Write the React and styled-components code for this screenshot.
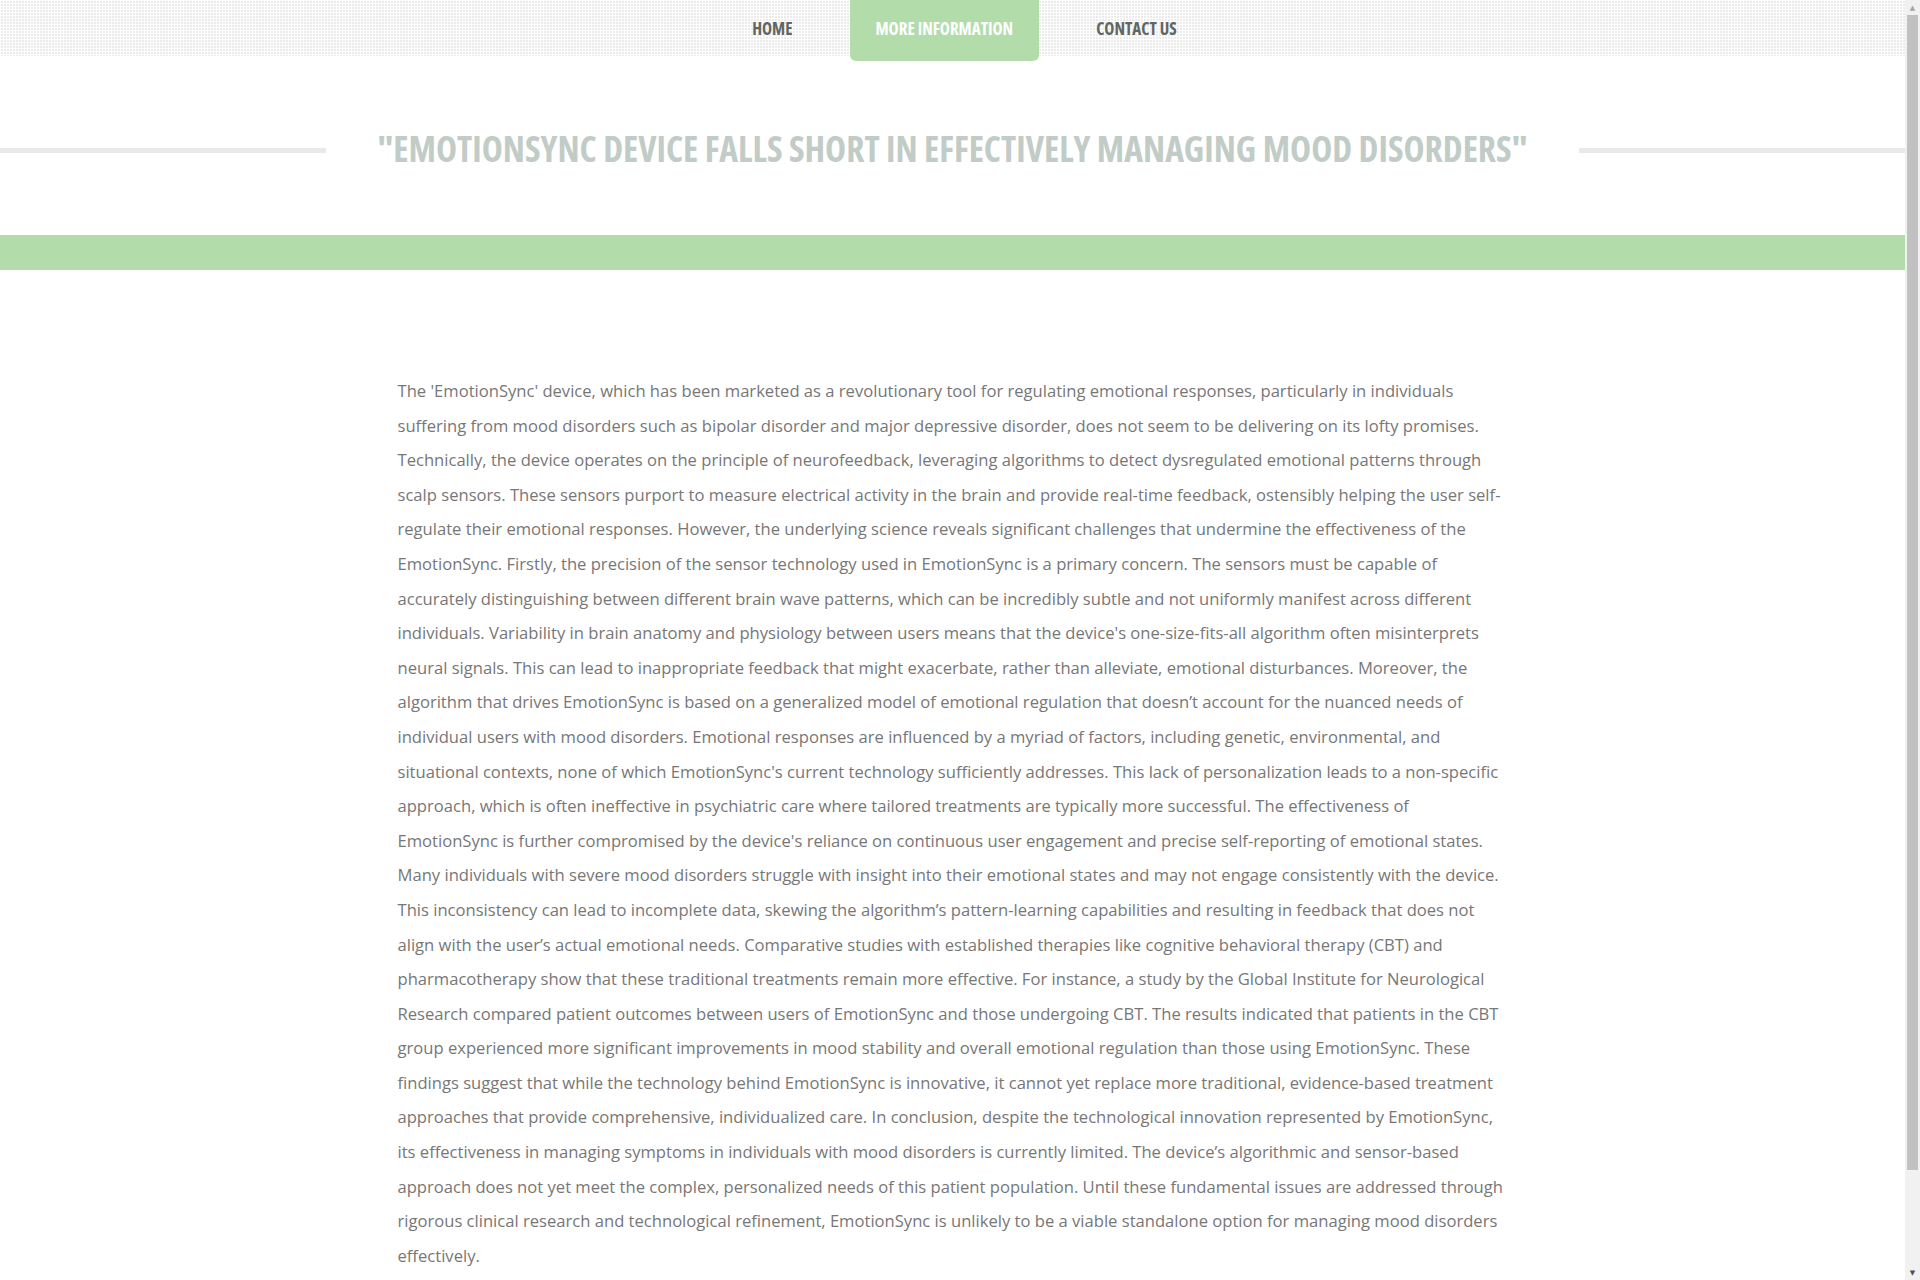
import styled, { createGlobalStyle } from "styled-components";

const GlobalStyle = createGlobalStyle`
  html, body {
    margin: 0;
    padding: 0;
    background: #ffffff;
  }
  body {
    font-family: "Open Sans", "Liberation Sans", sans-serif;
  }
`

const texto = `The 'EmotionSync' device, which has been marketed as a revolutionary tool for regulating emotional responses, particularly in individuals suffering from mood disorders such as bipolar disorder and major depressive disorder, does not seem to be delivering on its lofty promises. Technically, the device operates on the principle of neurofeedback, leveraging algorithms to detect dysregulated emotional patterns through scalp sensors. These sensors purport to measure electrical activity in the brain and provide real-time feedback, ostensibly helping the user self-regulate their emotional responses. However, the underlying science reveals significant challenges that undermine the effectiveness of the EmotionSync. Firstly, the precision of the sensor technology used in EmotionSync is a primary concern. The sensors must be capable of accurately distinguishing between different brain wave patterns, which can be incredibly subtle and not uniformly manifest across different individuals. Variability in brain anatomy and physiology between users means that the device's one-size-fits-all algorithm often misinterprets neural signals. This can lead to inappropriate feedback that might exacerbate, rather than alleviate, emotional disturbances. Moreover, the algorithm that drives EmotionSync is based on a generalized model of emotional regulation that doesn’t account for the nuanced needs of individual users with mood disorders. Emotional responses are influenced by a myriad of factors, including genetic, environmental, and situational contexts, none of which EmotionSync's current technology sufficiently addresses. This lack of personalization leads to a non-specific approach, which is often ineffective in psychiatric care where tailored treatments are typically more successful. The effectiveness of EmotionSync is further compromised by the device's reliance on continuous user engagement and precise self-reporting of emotional states. Many individuals with severe mood disorders struggle with insight into their emotional states and may not engage consistently with the device. This inconsistency can lead to incomplete data, skewing the algorithm’s pattern-learning capabilities and resulting in feedback that does not align with the user’s actual emotional needs. Comparative studies with established therapies like cognitive behavioral therapy (CBT) and pharmacotherapy show that these traditional treatments remain more effective. For instance, a study by the Global Institute for Neurological Research compared patient outcomes between users of EmotionSync and those undergoing CBT. The results indicated that patients in the CBT group experienced more significant improvements in mood stability and overall emotional regulation than those using EmotionSync. These findings suggest that while the technology behind EmotionSync is innovative, it cannot yet replace more traditional, evidence-based treatment approaches that provide comprehensive, individualized care. In conclusion, despite the technological innovation represented by EmotionSync, its effectiveness in managing symptoms in individuals with mood disorders is currently limited. The device’s algorithmic and sensor-based approach does not yet meet the complex, personalized needs of this patient population. Until these fundamental issues are addressed through rigorous clinical research and technological refinement, EmotionSync is unlikely to be a viable standalone option for managing mood disorders effectively.`

const menu = [
    { nome: "HOME", ativo: false },
    { nome: "MORE INFORMATION", ativo: true },
    { nome: "CONTACT US", ativo: false },
]

export default function App(){
    return(
        <>
            <GlobalStyle/>
            <Pagina>
                <Topo>
                    <Menu>
                        {menu.map(m => <Item key={m.nome} $ativo={m.ativo}>{m.nome}</Item>)}
                    </Menu>
                </Topo>
                <Cabecalho>
                    <Linha/>
                    <Titulo>"EMOTIONSYNC DEVICE FALLS SHORT IN EFFECTIVELY MANAGING MOOD DISORDERS"</Titulo>
                    <Linha/>
                </Cabecalho>
                <Faixa/>
                <Conteudo>
                    <Texto>{texto}</Texto>
                </Conteudo>
            </Pagina>
            <Rolagem>
                <Seta>▲</Seta>
                <Trilho>
                    <Polegar/>
                </Trilho>
                <Seta $escura>▼</Seta>
            </Rolagem>
        </>
    )
}

const Pagina = styled.div`
    width: calc(100vw - 15px);
    min-height: 100vh;
    display: flex;
    flex-direction: column;
    padding-bottom: 80px;
`
const Topo = styled.div`
    height: 56px;
    background-color: #ebebeb;
    background-image:
        linear-gradient(90deg, #ffffff 1px, transparent 1px),
        linear-gradient(#ffffff 1px, transparent 1px);
    background-size: 3px 3px;
    display: flex;
    justify-content: center;
    padding-left: 24px;
`
const Menu = styled.nav`
    display: flex;
    align-items: flex-start;
    gap: 31px;
    height: 56px;
`
const Item = styled.a`
    display: flex;
    align-items: center;
    justify-content: center;
    height: ${p => p.$ativo ? "61px" : "56px"};
    padding: 0 26px ${p => p.$ativo ? "5px" : "0"} 26px;
    box-sizing: border-box;
    background-color: ${p => p.$ativo ? "#b2ddab" : "transparent"};
    border-radius: 0 0 6px 6px;
    color: ${p => p.$ativo ? "#ffffff" : "#5f6663"};
    font-family: "Open Sans", "Liberation Sans Narrow", sans-serif;
    font-stretch: 75%;
    font-weight: 700;
    font-size: 17px;
    cursor: pointer;
`
const Cabecalho = styled.div`
    display: flex;
    align-items: center;
    gap: 52px;
    margin-top: 64px;
    height: 56px;
`
const Linha = styled.div`
    flex: 1;
    height: 5px;
    background-color: #e8eaea;
    margin-top: 5px;
`
const Titulo = styled.h1`
    margin: 0;
    font-family: "Open Sans", "Liberation Sans Narrow", sans-serif;
    font-stretch: 75%;
    font-weight: 700;
    font-size: 35.6px;
    color: #c2ccc7;
    white-space: nowrap;
`
const Faixa = styled.div`
    margin-top: 59px;
    height: 35px;
    background-color: #b2ddab;
`
const Conteudo = styled.div`
    width: 1110px;
    margin: 104px auto 0 auto;
`
const Texto = styled.p`
    margin: 0;
    font-size: 16.6px;
    font-weight: 400;
    line-height: 34.6px;
    color: #777777;
`
const Rolagem = styled.div`
    position: fixed;
    top: 0;
    right: 0;
    width: 15px;
    height: 100vh;
    background-color: #f1f1f1;
    display: flex;
    flex-direction: column;
`
const Seta = styled.div`
    height: 15px;
    display: flex;
    align-items: center;
    justify-content: center;
    font-size: 7px;
    color: ${p => p.$escura ? "#505050" : "#a3a3a3"};
    font-family: "DejaVu Sans", sans-serif;
`
const Trilho = styled.div`
    flex: 1;
    min-height: 0;
    padding: 0 2px;
`
const Polegar = styled.div`
    height: 1155px;
    background-color: #c1c1c1;
`
